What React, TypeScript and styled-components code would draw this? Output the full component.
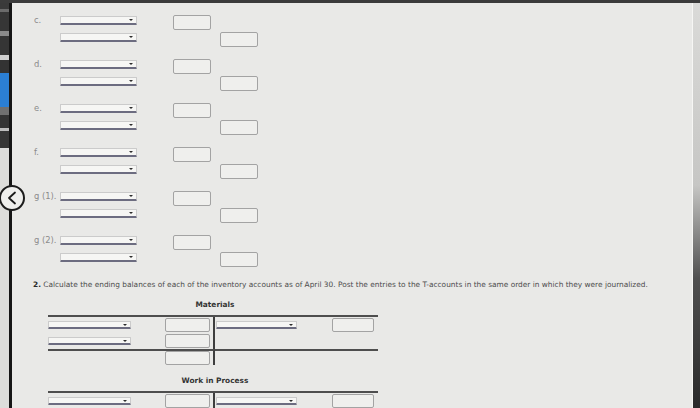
import React from "react";
import styled, { createGlobalStyle } from "styled-components";

const Global = createGlobalStyle`
  html, body { margin: 0; padding: 0; background: #2e2e2e; }
  body {
    width: 700px;
    height: 408px;
    overflow: hidden;
    font-family: "DejaVu Sans", Verdana, sans-serif;
  }
`;

const Screen = styled.div`
  width: 700px;
  height: 408px;
  display: flex;
  flex-direction: column;
  overflow: hidden;
  background: #e8e8e6;
`;

const TopBar = styled.div`
  flex: none;
  height: 3px;
  background: #3b3b3b;
`;

const Body = styled.div`
  position: relative;
  flex: 1;
  min-height: 0;
  display: flex;
`;

/* ---------- left side rail with the back button ---------- */

const Rail = styled.div`
  flex: none;
  width: 9px;
  display: flex;
  flex-direction: column;
  background: #dddddb;
`;

const RailSegment = styled.div<{ $h: number; $c: string }>`
  flex: none;
  height: ${(p) => p.$h}px;
  background: ${(p) => p.$c};
`;

const RailLine = styled.div`
  flex: none;
  width: 3px;
  background: #161616;
`;

const BackButton = styled.button`
  position: absolute;
  left: -1px;
  top: 182px;
  width: 26px;
  height: 26px;
  padding: 0;
  border-radius: 50%;
  border: 2px solid #1c1c1c;
  background: #efefed;
  display: flex;
  align-items: center;
  justify-content: center;
  box-sizing: border-box;
`;

const railSegments = [
  { h: 6, c: "#3a3a3a" },
  { h: 3, c: "#6b6b6b" },
  { h: 19, c: "#363636" },
  { h: 5, c: "#8a8a8a" },
  { h: 19, c: "#353535" },
  { h: 5, c: "#cfcfcf" },
  { h: 13, c: "#333333" },
  { h: 34, c: "#2b7fd4" },
  { h: 8, c: "#707070" },
  { h: 13, c: "#343434" },
  { h: 3, c: "#bdbdbd" },
  { h: 17, c: "#363636" },
];

/* ---------- main panel ---------- */

const Panel = styled.main`
  flex: 1;
  min-width: 0;
  display: flex;
  flex-direction: column;
  padding: 11px 0 0 21px;
  background: #e9e9e7;
`;

const RightEdge = styled.div`
  flex: none;
  width: 7px;
  border-left: 1px solid #f6f6f4;
  background: linear-gradient(#dadad8 0%, #c6c6c4 45%, #505050 68%, #2a2a2a 100%);
`;

const Entries = styled.div`
  display: flex;
  flex-direction: column;
  gap: 10px;
`;

const Group = styled.div`
  display: grid;
  grid-template-columns: 27px 77px 36px 38px 9px 38px;
  grid-template-rows: 17px 17px;
`;

const Label = styled.span`
  grid-column: 1;
  grid-row: 1;
  align-self: start;
  margin-top: 1px;
  margin-left: 1px;
  font-size: 8.4px;
  line-height: 11px;
  color: #8b8b8b;
  white-space: nowrap;
`;

const Select = styled.div<{ $row?: number; $col?: number; $w?: number }>`
  grid-column: ${(p) => p.$col ?? 2};
  grid-row: ${(p) => p.$row ?? 1};
  align-self: start;
  margin-top: 2px;
  width: ${(p) => (p.$w ? `${p.$w}px` : "auto")};
  height: 9px;
  box-sizing: border-box;
  display: flex;
  align-items: center;
  justify-content: flex-end;
  padding-right: 3px;
  background: #f6f6f4;
  border: 1px solid #cbcbcb;
  border-bottom: 2px solid #6c6c80;
  border-radius: 1px;
`;

const Caret = styled.span`
  width: 0;
  height: 0;
  border-left: 2px solid transparent;
  border-right: 2px solid transparent;
  border-top: 2.5px solid #2c2c2c;
`;

const Amount = styled.div<{ $row?: number; $col?: number }>`
  grid-column: ${(p) => p.$col ?? 4};
  grid-row: ${(p) => p.$row ?? 1};
  align-self: start;
  margin-top: 1px;
  height: 15px;
  box-sizing: border-box;
  border: 1.5px solid #a3a3a3;
  border-radius: 2px;
  background: #efefed;
`;

const Prompt = styled.p`
  margin: 12px 0 0;
  font-size: 7.4px;
  line-height: 10px;
  color: #4c4c4c;
  white-space: nowrap;
  b {
    color: #2a2a2a;
  }
`;

/* ---------- T-accounts ---------- */

const Ledger = styled.section<{ $gap: number }>`
  width: 330px;
  margin: ${(p) => p.$gap}px 0 0 15px;
  display: flex;
  flex-direction: column;
`;

const LedgerTitle = styled.h3`
  margin: 0 0 5px;
  padding-left: 4px;
  text-align: center;
  font-size: 7.4px;
  line-height: 10px;
  font-weight: bold;
  color: #333333;
`;

const TGrid = styled.div`
  display: grid;
  grid-template-columns: 167px 163px;
  grid-template-rows: 32px 16px;
  border-top: 2px solid #4e4e4e;
`;

const TCell = styled.div<{ $left?: boolean; $total?: boolean }>`
  display: flex;
  flex-direction: column;
  border-right: ${(p) => (p.$left ? "2px solid #3e3e3e" : "none")};
  border-top: ${(p) => (p.$total ? "2px solid #4e4e4e" : "none")};
`;

const TRow = styled.div<{ $side: "debit" | "credit" }>`
  height: 16px;
  flex: none;
  display: flex;
  align-items: center;
  justify-content: space-between;
  padding: ${(p) => (p.$side === "debit" ? "0 3px 0 0" : "0 4px 0 1px")};
`;

const TSelect = styled(Select)`
  margin-top: 0;
  align-self: center;
  height: 8px;
`;

const TAmount = styled.div<{ $w: number }>`
  width: ${(p) => p.$w}px;
  height: 14px;
  box-sizing: border-box;
  border: 1.5px solid #a3a3a3;
  border-radius: 2px;
  background: #efefed;
`;

const TTotalRow = styled.div`
  height: 14px;
  display: flex;
  justify-content: flex-end;
  padding-right: 3px;
`;

const labels = ["c.", "d.", "e.", "f.", "g (1).", "g (2)."];

function EntryGroup({ label }: { label: string }) {
  return (
    <Group>
      <Label>{label}</Label>
      <Select $row={1}>
        <Caret />
      </Select>
      <Select $row={2}>
        <Caret />
      </Select>
      <Amount $row={1} $col={4} />
      <Amount $row={2} $col={6} />
    </Group>
  );
}

function TAccount({ title, gap }: { title: string; gap: number }) {
  return (
    <Ledger $gap={gap}>
      <LedgerTitle>{title}</LedgerTitle>
      <TGrid>
        <TCell $left>
          <TRow $side="debit">
            <TSelect $w={83}>
              <Caret />
            </TSelect>
            <TAmount $w={45} />
          </TRow>
          <TRow $side="debit">
            <TSelect $w={83}>
              <Caret />
            </TSelect>
            <TAmount $w={45} />
          </TRow>
        </TCell>
        <TCell>
          <TRow $side="credit">
            <TSelect $w={81}>
              <Caret />
            </TSelect>
            <TAmount $w={42} />
          </TRow>
        </TCell>
        <TCell $left $total>
          <TTotalRow>
            <TAmount $w={45} />
          </TTotalRow>
        </TCell>
        <TCell $total />
      </TGrid>
    </Ledger>
  );
}

export default function App() {
  return (
    <>
      <Global />
      <Screen>
        <TopBar />
        <Body>
          <Rail>
            {railSegments.map((s, i) => (
              <RailSegment key={i} $h={s.h} $c={s.c} />
            ))}
          </Rail>
          <RailLine />
          <BackButton aria-label="Back">
            <svg width="12" height="14" viewBox="0 0 12 14">
              <path d="M9 1.5 L3 7 L9 12.5" fill="none" stroke="#1a1a1a" strokeWidth="1.8" strokeLinecap="round" strokeLinejoin="round" />
            </svg>
          </BackButton>
          <Panel>
            <Entries>
              {labels.map((l) => (
                <EntryGroup key={l} label={l} />
              ))}
            </Entries>
            <Prompt>
              <b>2.</b> Calculate the ending balances of each of the inventory accounts as of April 30. Post the entries to the
              T-accounts in the same order in which they were journalized.
            </Prompt>
            <TAccount title="Materials" gap={10} />
            <TAccount title="Work in Process" gap={11} />
          </Panel>
          <RightEdge />
        </Body>
      </Screen>
    </>
  );
}
